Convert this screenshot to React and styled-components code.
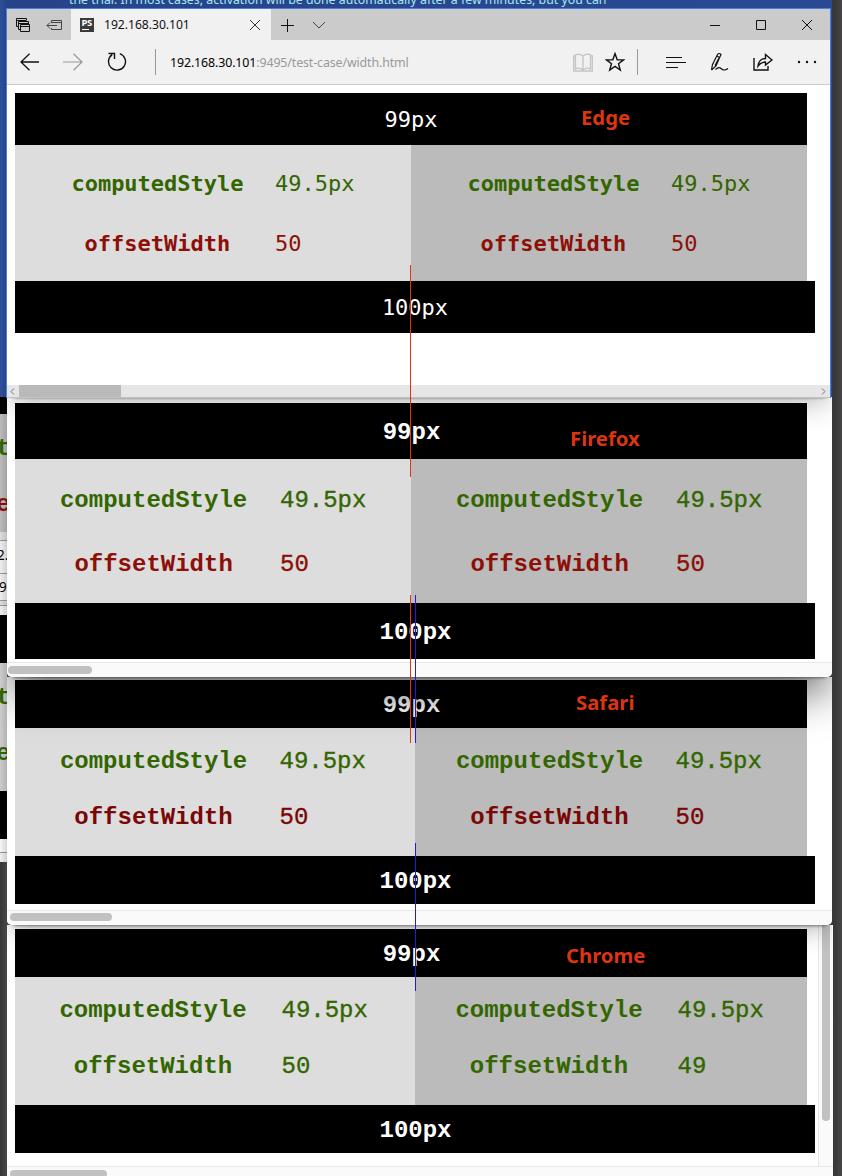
import React from "react";
import styled, { createGlobalStyle } from "styled-components";

const Global = createGlobalStyle`
  *{box-sizing:border-box}
  body{margin:0;overflow:hidden}
`;
const Desktop = styled.main`
  position:relative;width:842px;height:1176px;overflow:hidden;
  background:linear-gradient(90deg,#363636,#474747 7px,#444 830px,#363636 833px,#454545 842px);
`;
const Wallpaper = styled.div`
  position:absolute;left:0;top:0;width:832px;height:397px;background:linear-gradient(90deg,#2d4f9a,#26438a 7px,#294a93);
  font:12.33px/16px "Noto Sans",sans-serif;color:#a8e6ee;
  overflow:hidden;
  p{margin:-8px 0 0 69px;white-space:nowrap}
`;
const Window = styled.section`
  position:absolute;left:7px;top:${p => p.$top}px;width:${p => p.$width || 825}px;height:${p => p.$height}px;
  display:flex;flex-direction:column;background:#fff;overflow:hidden;z-index:${p => p.$z};
  border-radius:0 0 ${p => p.$round}px ${p => p.$round}px;
`;
const Shadow = styled.div`
  position:absolute;left:7px;top:${p => p.$top}px;width:825px;height:${p => p.$height}px;z-index:${p => p.$z};
  overflow:hidden;pointer-events:none;
  &::before{content:"";position:absolute;left:4px;right:4px;top:-100px;height:100px;border-radius:5px;
    box-shadow:0 ${p => p.$drop}px ${p => p.$blur}px rgba(0,0,0,${p => p.$alpha}),0 1px 3px rgba(0,0,0,.45)}
`;
const EdgeFrame = styled(Window)`
  border:1px solid #4580dc;border-bottom:0;left:6px;
`;
const TabStrip = styled.div`
  height:31px;flex:none;display:flex;background:#cbcbcb;align-items:stretch;
`;
const TabTools = styled.div`
  width:64px;display:flex;align-items:center;padding-left:8px;gap:15px;
`;
const Tab = styled.div`
  width:200px;background:#f1f1f1;display:flex;align-items:center;padding:0 10px 0 9px;
  font:12.2px "Noto Sans",sans-serif;color:#111;letter-spacing:-.05px;
  span{margin-left:10px;flex:1}
`;
const Favicon = styled.b`
  width:14px;height:14px;background:#3b3b3b;color:#fff;font:bold 9.5px/9px "Noto Sans",sans-serif;
  letter-spacing:-.3px;padding-left:1.5px;position:relative;
  &::after{content:"";position:absolute;left:2px;bottom:2px;width:7px;height:1px;background:#fff}
`;
const NewTab = styled.div`display:flex;align-items:center;gap:18px;padding-left:9px;flex:1`;
const Controls = styled.div`display:flex;align-items:center;gap:34px;padding-right:17px`;
const Toolbar = styled.div`
  height:45px;flex:none;background:#f1f1f1;border-bottom:1px solid #ccc;display:flex;align-items:center;
  padding:0 13px;
`;
const Nav = styled.div`display:flex;gap:24px;width:135px;align-items:center`;
const Divider = styled.i`width:1px;height:26px;background:#999;flex:none`;
const Address = styled.div`
  flex:1;padding-left:14px;font:12.4px "Noto Sans",sans-serif;color:#999;letter-spacing:-.12px;white-space:nowrap;
  b{font-weight:400;color:#000}
`;
const PageTools = styled.div`display:flex;align-items:center;gap:12px;margin-right:12px`;
const HubTools = styled.div`display:flex;align-items:center;gap:24px;margin-left:28px`;

const Page = styled.div`
  flex:1;padding:${p => p.$pad}px 0 0 8px;min-height:0;
  font:${p => p.$mono ? '22px "DejaVu Sans Mono",monospace' : '24px "Courier New","Liberation Mono",monospace'};
`;
const Bar = styled.div`
  width:${p => p.$w}px;height:${p => p.$h}px;background:#000;color:#fff;
  display:flex;align-items:center;justify-content:center;font-weight:${p => p.$bold ? 700 : 400};
  padding:${p => p.$bold ? "3px 0 0 1px" : 0};
`;
const Columns = styled.div`display:flex;width:792px;height:${p => p.$h}px`;
const Column = styled.div`
  width:${p => p.$w}px;background:${p => p.$bg};padding:${p => p.$pt}px 0 0 ${p => p.$indent}px;
`;
const Row = styled.div`
  height:${p => p.$h}px;display:grid;grid-template-columns:${p => p.$label}px 1fr;column-gap:${p => p.$gap}px;align-items:center;
  color:${p => p.$color};line-height:28px;
  b{text-align:center}
  span{-webkit-text-stroke:${p => p.$stroke}px currentColor}
`;
const Tag = styled.strong`
  position:absolute;left:${p => p.$x}px;top:${p => p.$y}px;z-index:20;color:#dc3510;
  font:bold 20.3px/24px "Noto Sans",sans-serif;
`;
const Guide = styled.i`
  position:absolute;left:${p => p.$x}px;top:${p => p.$y}px;width:1px;height:${p => p.$h}px;background:${p => p.$c};z-index:20;
`;
const ScrollTrack = styled.div`
  height:${p => p.$h}px;flex:none;background:#fafafa;border-top:1px solid #e7e7e7;padding:${p => p.$pt}px 0 0 ${p => p.$x}px;
  i{display:block;width:${p => p.$w}px;height:8px;border-radius:4px;background:#c1c1c1}
`;
const EdgeScroll = styled.div`
  height:13px;flex:none;background:#e6e6e6;display:flex;align-items:center;justify-content:space-between;border-bottom:1px solid #c2c2c2;
  i{width:102px;height:12px;background:#b9b9b9;margin-right:auto}
  svg{margin:0 4px 0 3px}
`;
const Body = styled.div`flex:1;display:flex;min-height:0`;
const VScroll = styled.div`
  width:15px;background:#fafafa;border-left:1px solid #e7e7e7;padding-left:3px;
  i{display:block;width:8px;height:196px;background:#c1c1c1;border-radius:0 0 4px 4px}
`;
const Sliver = styled.div`
  position:absolute;left:0;top:397px;width:7px;height:465px;overflow:hidden;
  font:bold 24px/28px "Courier New","Liberation Mono",monospace;
  &::after{content:"";position:absolute;inset:0;background:linear-gradient(90deg,transparent,rgba(0,0,0,.13))}
`;
const Slice = styled.div`
  height:${p => p.$h}px;background:${p => p.$bg};
  padding-top:${p => p.$pt || 0}px;border-bottom:${p => p.$line ? "1px solid #999" : "0"};white-space:nowrap;
`;
const SliceLetter = styled.span`
  display:block;height:28px;margin:0 0 ${p => p.$gap}px -4px;color:${p => p.$color};
`;
const SliceDigit = styled.small`
  display:block;margin-left:${p => p.$x}px;font:13.5px/18px "Noto Sans",sans-serif;color:#000;
`;

const Icon = ({ w, h, d, sw = 1, c = "#111", children }) => (
  <svg width={w} height={h} viewBox={`0 0 ${w} ${h}`} fill="none" stroke={c} strokeWidth={sw}>
    {d && <path d={d} />}
    {children}
  </svg>
);

const GREEN = "#336600", RED = "#8c0f08", DARK_RED = "#780706";

function Measures({ h, split = 396, pt, rowH, label, indents, gap = 33, red = RED, second = "50", stroke = 0.35 }) {
  return (
    <Columns $h={h}>
      {[0, 1].map(i => (
        <Column key={i} $w={i ? 792 - split : split} $bg={i ? "#bbb" : "#ddd"} $pt={pt} $indent={indents[i]}>
          <Row $h={rowH} $label={label} $gap={gap} $color={GREEN} $stroke={stroke}><b>computedStyle</b><span>49.5px</span></Row>
          <Row $h={rowH} $label={label} $gap={gap} $color={red} $stroke={stroke}><b>offsetWidth</b><span>{i ? second : "50"}</span></Row>
        </Column>
      ))}
    </Columns>
  );
}

export default function App() {
  return (
    <Desktop>
      <Global />
      <Wallpaper><p>the trial. In most cases, activation will be done automatically after a few minutes, but you can</p></Wallpaper>
      <Sliver>
        <Slice $h={17} $bg="#000" />
        <Slice $h={118} $bg="#bbb" $pt={21}>
          <SliceLetter $color={GREEN} $gap={28}>t</SliceLetter>
          <SliceLetter $color={RED} $gap={0}>e</SliceLetter>
        </Slice>
        <Slice $h={9} $bg="#ddd" $line />
        <Slice $h={33} $bg="#eee" $line $pt={5}><SliceDigit $x={-3}>2.</SliceDigit></Slice>
        <Slice $h={27} $bg="#eee" $line $pt={4}><SliceDigit $x={-1}>9</SliceDigit></Slice>
        <Slice $h={5} $bg="#ddd" $line />
        <Slice $h={9} $bg="#eee" />
        <Slice $h={48} $bg="#000" />
        <Slice $h={128} $bg="#ccc" $pt={21}>
          <SliceLetter $color={GREEN} $gap={28}>t</SliceLetter>
          <SliceLetter $color={GREEN} $gap={0}>e</SliceLetter>
        </Slice>
        <Slice $h={48} $bg="#000" />
        <Slice $h={14} $bg="#f5f5f5" $line />
        <Slice $h={9} $bg="#eee" />
      </Sliver>

      <Window $top={925} $height={251} $z={1} $width={826} $round={0}>
        <Body>
          <Page $pad={4}>
            <Bar $w={792} $h={48} $bold><span>99px</span></Bar>
            <Measures h={128} split={400} pt={6} rowH={56} label={188} indents={[44, 40]} gap={34.5} red={GREEN} second="49" />
            <Bar $w={800} $h={48} $bold><span>100px</span></Bar>
          </Page>
          <VScroll><i /></VScroll>
        </Body>
        <ScrollTrack $h={10} $pt={3} $x={3} $w={97}><i /></ScrollTrack>
      </Window>
      <Shadow $top={925} $height={40} $z={2} $drop={5} $blur={24} $alpha={0.3} />

      <Window $top={677} $height={248} $z={3} $round={5}>
        <Page $pad={3}>
          <Bar $w={792} $h={48} $bold><span>99px</span></Bar>
          <Measures h={128} split={400} pt={6} rowH={56} label={188} indents={[44.5, 40.5]} gap={32} red={DARK_RED} />
          <Bar $w={800} $h={48} $bold><span>100px</span></Bar>
        </Page>
        <ScrollTrack $h={15} $pt={2} $x={3} $w={102}><i /></ScrollTrack>
      </Window>
      <Shadow $top={677} $height={80} $z={4} $drop={18} $blur={40} $alpha={0.55} />

      <Window $top={397} $height={280} $z={5} $round={5}>
        <Page $pad={6}>
          <Bar $w={792} $h={56} $bold><span>99px</span></Bar>
          <Measures h={144} pt={10} rowH={64} label={188} indents={[44.6, 44.6]} gap={32.4} />
          <Bar $w={800} $h={56} $bold><span>100px</span></Bar>
        </Page>
        <ScrollTrack $h={15} $pt={3} $x={1} $w={84}><i /></ScrollTrack>
      </Window>
      <Shadow $top={397} $height={50} $z={6} $drop={5} $blur={30} $alpha={0.3} />

      <EdgeFrame $top={8} $height={390} $z={7} $round={0}>
        <TabStrip>
          <TabTools>
            <Icon w={16} h={16} d="M3 9.5H1.5V1.5H11.5V3.5M1.5 3.5H11M5 12.5H3.5V4.5H13.5V7M3.5 6.5H13M5.5 7.5H14.5V14.5H5.5ZM5.5 9.5H14.5" />
            <Icon w={17} h={14} c="#444" d="M5.5 5V2.5H15.5V11.5H5.5V10M5.5 4.5H15.5M11 7.5H1M4 4.5L1 7.5L4 10.5" />
          </TabTools>
          <Tab>
            <Favicon>PS</Favicon><span>192.168.30.101</span>
            <Icon w={12} h={12} d="M1 1L11 11M11 1L1 11" c="#333" />
          </Tab>
          <NewTab>
            <Icon w={14} h={14} d="M7.5 1V14M1 7.5H14" />
            <Icon w={14} h={10} d="M1 2L7 8L13 2" c="#444" />
          </NewTab>
          <Controls>
            <Icon w={12} h={12} d="M1 6.5H11" />
            <Icon w={12} h={12} d="M1.5 1.5H10.5V10.5H1.5Z" />
            <Icon w={12} h={12} d="M1 1L11 11M11 1L1 11" />
          </Controls>
        </TabStrip>
        <Toolbar>
          <Nav>
            <Icon w={19} h={18} d="M.8 9H19M9.5 .8L1 9L9.5 17.2" sw={1.3} />
            <Icon w={20} h={18} d="M0 9H19M10.5 .8L19 9L10.5 17.2" sw={1.2} c="#999" />
            <Icon w={20} h={20} d="M12.8 1.6A8.5 8.5 0 1 1 5.2 2.6M1.5 1.5H7.5V7" sw={1.4} />
          </Nav>
          <Divider />
          <Address><b>192.168.30.101</b>:9495/test-case/width.html</Address>
          <PageTools>
            <Icon w={20} h={19} c="#c4c4c4" sw={1.3} d="M10 3Q6 0 2.5 2V16Q6 14 10 17Q14 14 17.5 16V2Q14 0 10 3V17M2 3H.7V18H19.3V3H18" />
            <Icon w={20} h={20} sw={1.4} d="M10 1.6L12.2 7.7L18.6 7.9L13.5 11.8L15.3 18L10 14.4L4.7 18L6.5 11.8L1.4 7.9L7.8 7.7Z" />
          </PageTools>
          <Divider />
          <HubTools>
            <Icon w={20} h={14} d="M0 2.5H16M0 7.5H20M0 12.5H12" />
            <Icon w={19} h={20} sw={1.2} d="M1.5 18L2.5 12.5L7.5 2.5Q9 .5 11 2.5L6 14L1.5 18M7 4L9.5 5.5M9 6L5 13.5M5.5 17.5Q9 14.5 11 16.5Q14 19.5 18 16.5" />
            <Icon w={20} h={20} sw={1.4} d="M1 6V18H15V14M5 14Q6 6.5 12.5 6.5V2.5L19 8L12.5 13V10Q8 10 5 14Z" />
            <Icon w={20} h={4}><g fill="#111" stroke="none"><circle cx="2" cy="2" r="1.2" /><circle cx="10" cy="2" r="1.2" /><circle cx="18" cy="2" r="1.2" /></g></Icon>
          </HubTools>
        </Toolbar>
        <Page $pad={8} $mono>
          <Bar $w={792} $h={52}><span>99px</span></Bar>
          <Measures h={136} pt={9} rowH={60} label={172} indents={[56.4, 56.4]} gap={31.6} stroke={0} />
          <Bar $w={800} $h={52}><span>100px</span></Bar>
        </Page>
        <EdgeScroll>
          <Icon w={5} h={7} d="M4 .5L1 3.5L4 6.5" c="#777" />
          <i />
          <Icon w={5} h={7} d="M1 .5L4 3.5L1 6.5" c="#777" />
        </EdgeScroll>
      </EdgeFrame>

      <Tag $x={581} $y={105}>Edge</Tag>
      <Tag $x={570} $y={426}>Firefox</Tag>
      <Tag $x={576} $y={690}>Safari</Tag>
      <Tag $x={566} $y={943}>Chrome</Tag>
      <Guide $x={410} $y={265} $h={212} $c="#dc3510" />
      <Guide $x={410} $y={595} $h={148} $c="#dc3510" />
      <Guide $x={415} $y={595} $h={148} $c="#2818dc" />
      <Guide $x={415} $y={843} $h={148} $c="#2818dc" />
    </Desktop>
  );
}
